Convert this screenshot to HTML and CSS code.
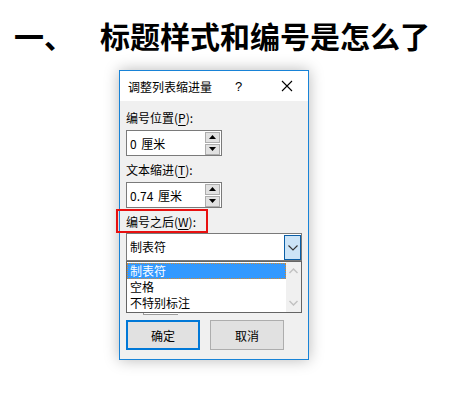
FILE: index.html
```html
<!DOCTYPE html>
<html lang="zh-CN">
<head>
<meta charset="utf-8">
<link rel="stylesheet" href="styles.css">
</head>
<body>
<div class="page">
  <h1 class="heading"><span class="num">一、</span><span class="htext">标题样式和编号是怎么了</span></h1>
  <div class="dialog">
    <div class="titlebar">
      <span class="ttl">调整列表缩进量</span>
      <span class="help">?</span>
      <span class="close"><svg width="12" height="12" viewBox="0 0 12 12"><path d="M1 1L11 11M11 1L1 11" stroke="#000" stroke-width="1.1"/></svg></span>
    </div>
    <div class="body">
      <div class="label">编号位置(<u>P</u>):</div>
      <div class="spin">
        <div class="val">0 厘米</div>
        <div class="btns">
          <div class="sbtn"><svg width="7" height="4" viewBox="0 0 7 4"><path d="M3.5 0L7 4H0Z" fill="#000"/></svg></div>
          <div class="sbtn"><svg width="7" height="4" viewBox="0 0 7 4"><path d="M0 0H7L3.5 4Z" fill="#000"/></svg></div>
        </div>
      </div>
      <div class="label l2">文本缩进(<u>T</u>):</div>
      <div class="spin">
        <div class="val">0.74 厘米</div>
        <div class="btns">
          <div class="sbtn"><svg width="7" height="4" viewBox="0 0 7 4"><path d="M3.5 0L7 4H0Z" fill="#000"/></svg></div>
          <div class="sbtn"><svg width="7" height="4" viewBox="0 0 7 4"><path d="M0 0H7L3.5 4Z" fill="#000"/></svg></div>
        </div>
      </div>
      <div class="label l3">编号之后(<u>W</u>):<span class="mark"></span></div>
      <div class="combo">
        <div class="cval">制表符</div>
        <div class="drop"><svg width="10" height="6" viewBox="0 0 10 6"><path d="M0.5 0.5L5 5L9.5 0.5" fill="none" stroke="#333" stroke-width="1.1"/></svg></div>
      </div>
      <div class="below">
        <div class="hidden-box"></div>
        <div class="list">
          <div class="items">
            <div class="item sel">制表符</div>
            <div class="item">空格</div>
            <div class="item">不特别标注</div>
          </div>
          <div class="sbar">
            <svg width="9" height="6" viewBox="0 0 9 6"><path d="M0.5 5L4.5 1L8.5 5" fill="none" stroke="#c2c2c2" stroke-width="1.5"/></svg>
            <svg width="9" height="6" viewBox="0 0 9 6"><path d="M0.5 1L4.5 5L8.5 1" fill="none" stroke="#c2c2c2" stroke-width="1.5"/></svg>
          </div>
        </div>
      </div>
      <div class="buttons">
        <div class="btn ok">确定</div>
        <div class="btn">取消</div>
      </div>
    </div>
  </div>
</div>
</body>
</html>
```
FILE: styles.css
```css
html, body {
  margin: 0;
  padding: 0;
  background: #fff;
}
.page {
  width: 456px;
  height: 400px;
  box-sizing: border-box;
  position: relative;
  font-family: "Noto Sans CJK SC", "Noto Sans", sans-serif;
}
.heading {
  margin: 0;
  padding: 16px 0 0 14px;
  height: 55px;
  box-sizing: border-box;
  display: flex;
  white-space: nowrap;
  font-size: 30px;
  line-height: 38px;
  font-weight: 700;
  color: #000;
  letter-spacing: 0;
}
.heading .num {
  width: 86px;
  flex: none;
}
.heading .htext {
  flex: none;
}
.dialog {
  margin: 15px 0 0 119px;
  width: 190px;
  height: 290px;
  box-sizing: border-box;
  border: 1px solid #1883d7;
  background: #f0f0f0;
  box-shadow: 0 0 14px rgba(0, 0, 0, 0.28);
  font-size: 12px;
  color: #000;
}
.titlebar {
  height: 30px;
  background: #fff;
  display: flex;
  align-items: center;
  padding-left: 8px;
}
.titlebar .ttl {
  width: 107px;
}
.titlebar .help {
  width: 46px;
  font-family: "Liberation Sans", sans-serif;
  font-size: 13px;
}
.titlebar .close {
  display: flex;
  align-items: center;
}
.body {
  padding: 8px 0 0 6px;
}
.label {
  height: 17px;
  line-height: 17px;
  margin-bottom: 4px;
  position: relative;
}
.label u {
  text-decoration-thickness: 1px;
  text-underline-offset: 2px;
}
.l2 {
  margin-top: 5px;
}
.l3 {
  margin-top: 5px;
  margin-bottom: 3px;
}
.mark {
  position: absolute;
  left: -10px;
  top: -4px;
  width: 88px;
  height: 20px;
  border: 2px solid #e81010;
}
.spin {
  width: 96px;
  height: 26px;
  box-sizing: border-box;
  border: 1px solid #7a7a7a;
  background: #fff;
  display: flex;
  align-items: center;
  padding: 0 1px 0 3px;
}
.spin .val {
  flex: 1;
  word-spacing: 2px;
}
.btns {
  display: flex;
  flex-direction: column;
  gap: 1px;
}
.sbtn {
  width: 15px;
  height: 11px;
  box-sizing: border-box;
  border: 1px solid #adadad;
  background: #e1e1e1;
  display: flex;
  align-items: center;
  justify-content: center;
}
.combo {
  width: 176px;
  height: 28px;
  box-sizing: border-box;
  border: 1px solid #7a7a7a;
  background: #fff;
  display: flex;
  align-items: stretch;
}
.combo .cval {
  flex: 1;
  padding-left: 3px;
  line-height: 26px;
}
.combo .drop {
  width: 17px;
  box-sizing: border-box;
  border: 1px solid #0a5ea6;
  background: #cce4f7;
  display: flex;
  align-items: center;
  justify-content: center;
  margin: 1px 0 0 0;
}
.below {
  position: relative;
  height: 59px;
}
.hidden-box {
  position: absolute;
  left: 17px;
  top: 38px;
  width: 34px;
  height: 15px;
  border-left: 1px solid #9a9a9a;
  border-bottom: 1px solid #9a9a9a;
  background: #fff;
}
.list {
  position: absolute;
  left: 0;
  top: 0;
  width: 176px;
  height: 52px;
  box-sizing: border-box;
  border: 1px solid #646464;
  background: #fff;
  display: flex;
}
.items {
  flex: 1;
  padding-top: 1px;
}
.item {
  height: 16px;
  line-height: 16px;
  padding-left: 3px;
  box-sizing: border-box;
}
.item.sel {
  background: #3399ff;
  color: #fff;
  outline: 1px dotted #d98a2b;
  outline-offset: -1px;
}
.sbar {
  width: 15px;
  background: #f0f0f0;
  display: flex;
  flex-direction: column;
  align-items: center;
  justify-content: space-between;
  padding: 6px 0 6px;
  box-sizing: border-box;
}
.buttons {
  display: flex;
  gap: 10px;
}
.btn {
  width: 74px;
  height: 30px;
  box-sizing: border-box;
  border: 1px solid #adadad;
  background: #e1e1e1;
  display: flex;
  align-items: center;
  justify-content: center;
}
.btn.ok {
  border: 2px solid #0078d7;
}
```
